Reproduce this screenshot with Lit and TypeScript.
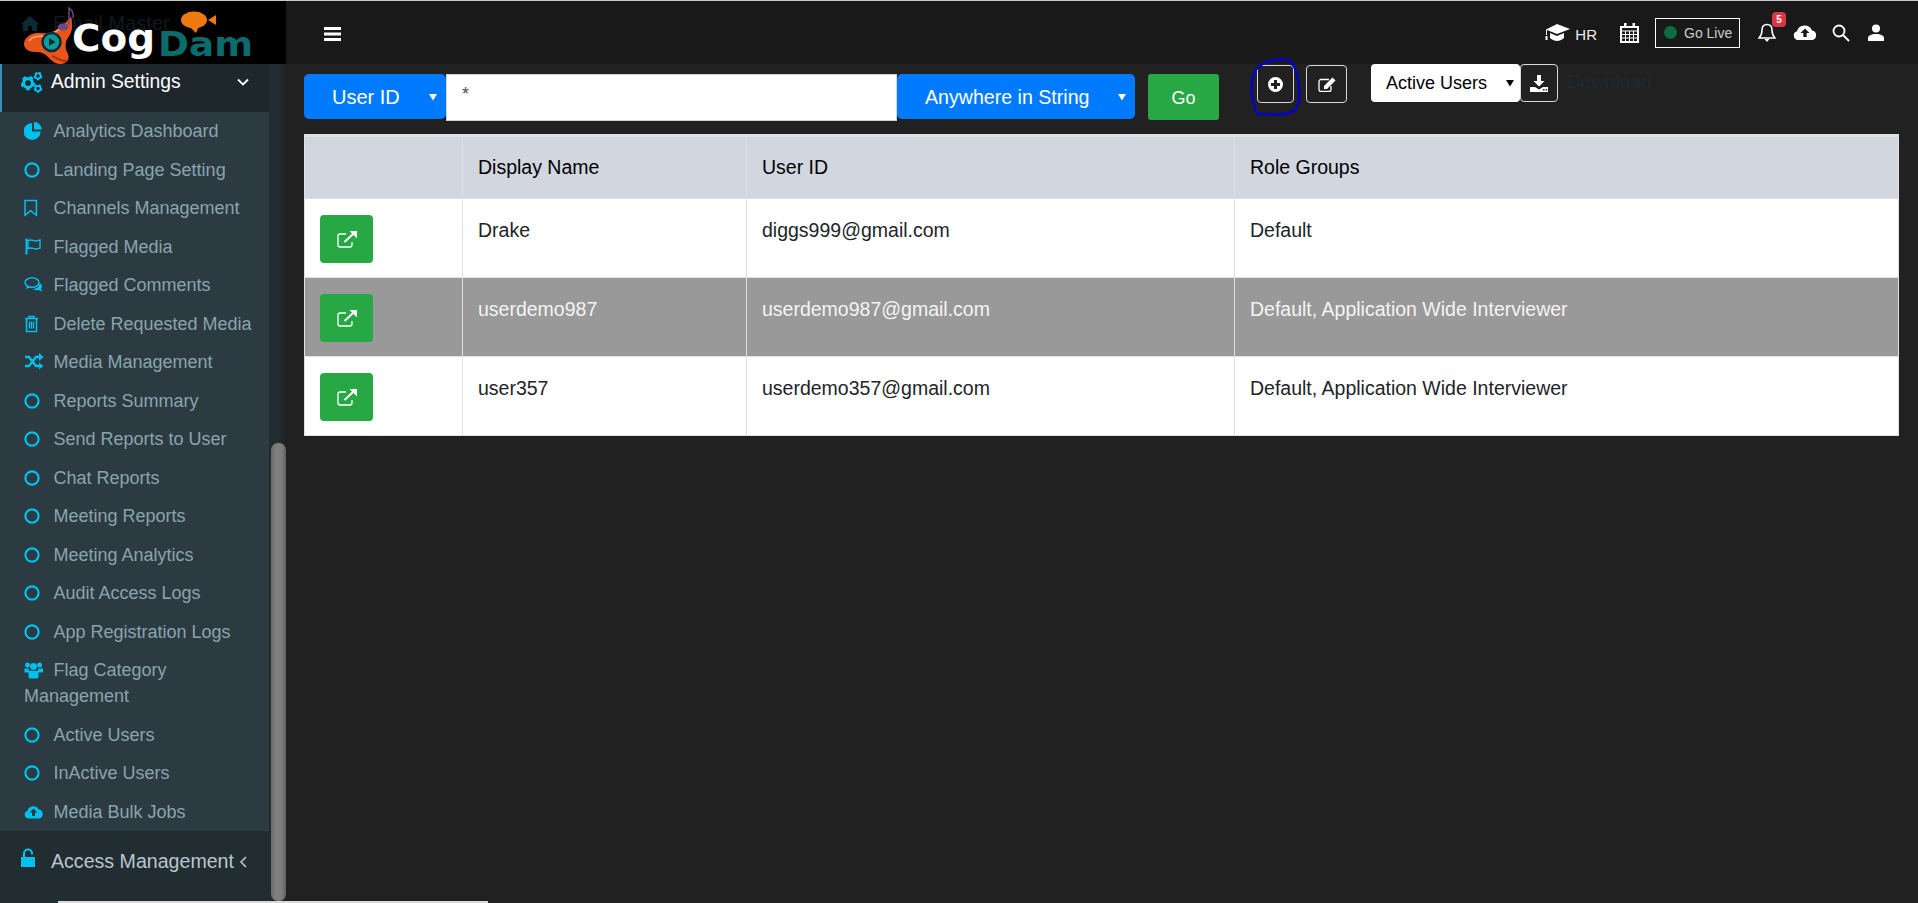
import { LitElement, html, css, svg } from "lit";
import { customElement } from "lit/decorators.js";

const ring = html`<svg class="ico" viewBox="0 0 20 20"><circle cx="8" cy="10" r="6.6" fill="none" stroke="currentColor" stroke-width="2.2" /></svg>`;
const pie = html`<svg class="ico" viewBox="0 0 20 20"><path d="M8 2v8.5h8.6A8.5 8.5 0 1 1 8 2z" fill="currentColor" /><path d="M10 1a8 8 0 0 1 7.8 7.6H10z" fill="currentColor" /></svg>`;
const bookmark = html`<svg class="ico" viewBox="0 0 20 20"><path d="M1 2.5h11.4v14.6L6.7 12.6 1 17.1z" fill="none" stroke="currentColor" stroke-width="1.5" /></svg>`;
const flag = html`<svg class="ico" viewBox="0 0 20 20"><path d="M1.5 1.5h2v16h-2z" fill="currentColor" /><path d="M4 3.5c3-1.5 4 0 7 .4 2 .2 3.5-.4 5-.9v8.2c-2 .8-3.5 1-5.5.5-2.5-.6-4-1.3-6.5-.2z" fill="none" stroke="currentColor" stroke-width="1.4" /></svg>`;
const comments = html`<svg class="ico" viewBox="0 0 20 20"><ellipse cx="8" cy="7.5" rx="7" ry="4.8" fill="none" stroke="currentColor" stroke-width="1.4" /><path d="M3 11l-1 3 4-1.6zM15.5 8c2.5 1 3.5 3.5 1.5 5.5l1.5 3-4.5-1.5c-2 .4-4 0-5.5-1 3 0 7-1.5 7-6z" fill="currentColor" /></svg>`;
const trash = html`<svg class="ico" viewBox="0 0 20 20"><path d="M1 4.5h13M5 4.5V2.5h5v2M2.5 4.5v13h10v-13" fill="none" stroke="currentColor" stroke-width="1.6" /><path d="M5.5 7.5v7M7.5 7.5v7M9.5 7.5v7" stroke="currentColor" stroke-width="1.3" /></svg>`;
const shuffle = html`<svg class="ico" viewBox="0 0 20 20"><path d="M1 5h4l7 9h4M1 14h4l7-9h4" fill="none" stroke="currentColor" stroke-width="2.4" /><path d="M15 1l4.5 4L15 9zM15 10.5l4.5 3.5L15 17.5z" fill="currentColor" /></svg>`;
const users = html`<svg class="ico" viewBox="0 0 20 20"><circle cx="3.5" cy="5" r="2.5" fill="currentColor" /><circle cx="15.5" cy="5" r="2.5" fill="currentColor" /><circle cx="9.5" cy="6.5" r="3.4" fill="currentColor" /><path d="M0.5 8.5h4l1 4H0.5zM14.5 8.5h4.5v4h-5.5z" fill="currentColor" /><path d="M4.5 11.5c1 -1 2-1 3-.8h4c1-.2 2 0 3 .8v5.5c0 1-1 1.5-2 1.5h-6c-1 0-2-.5-2-1.5z" fill="currentColor" /></svg>`;
const cloudUp = html`<svg class="ico" viewBox="0 0 20 20"><path d="M4.5 16.5a4 4 0 0 1-1-7.8 6 6 0 0 1 11-1.5 4.8 4.8 0 0 1 1 9.3z" fill="currentColor" /><path d="M9.5 6.5l3.8 4h-2.3v3.5H8v-3.5H5.7z" fill="#2c3b41" /></svg>`;

const navItems = [
  { label: "Analytics Dashboard", icon: pie },
  { label: "Landing Page Setting", icon: ring },
  { label: "Channels Management", icon: bookmark },
  { label: "Flagged Media", icon: flag },
  { label: "Flagged Comments", icon: comments },
  { label: "Delete Requested Media", icon: trash },
  { label: "Media Management", icon: shuffle },
  { label: "Reports Summary", icon: ring },
  { label: "Send Reports to User", icon: ring },
  { label: "Chat Reports", icon: ring },
  { label: "Meeting Reports", icon: ring },
  { label: "Meeting Analytics", icon: ring },
  { label: "Audit Access Logs", icon: ring },
  { label: "App Registration Logs", icon: ring },
  { label: "Flag Category Management", icon: users },
  { label: "Active Users", icon: ring },
  { label: "InActive Users", icon: ring },
  { label: "Media Bulk Jobs", icon: cloudUp },
];

const rows = [
  { name: "Drake", id: "diggs999@gmail.com", roles: "Default" },
  { name: "userdemo987", id: "userdemo987@gmail.com", roles: "Default, Application Wide Interviewer", hot: true },
  { name: "user357", id: "userdemo357@gmail.com", roles: "Default, Application Wide Interviewer" },
];

const caret = html`<svg class="caret" viewBox="0 0 8 8"><path d="M0 1h8L4 7.5z" fill="currentColor" /></svg>`;

const cog = (x: number, y: number, r: number) => svg`
  <circle cx=${x} cy=${y} r=${r} fill="none" stroke="currentColor" stroke-width=${r * 0.7} />
  <circle cx=${x} cy=${y} r=${r * 1.4} fill="none" stroke="currentColor" stroke-width=${r * 0.55} stroke-dasharray=${r * 0.85} />`;

@customElement("app-root")
export class AppRoot extends LitElement {
  static styles = css`
    :host {
      display: block;
      position: relative;
      width: 1918px;
      height: 903px;
      overflow: hidden;
      background: #212121;
      font-family: "Liberation Sans", Arial, sans-serif;
      color: #212529;
    }
    .topline {
      height: 1px;
      background: #c9c9c9;
    }
    .shell {
      display: flex;
      height: 902px;
    }
    aside {
      width: 286px;
      flex: none;
      display: flex;
      flex-direction: column;
    }
    .brand {
      height: 63px;
      background: #000;
      flex: none;
    }
    .brand svg {
      display: block;
    }
    .side-body {
      flex: 1;
      display: flex;
      min-height: 0;
    }
    .menu {
      width: 269px;
      flex: none;
      display: flex;
      flex-direction: column;
      background: #222d32;
    }
    .track {
      flex: 1;
      background: linear-gradient(to right, #222d32, #222d32 60%, #212121);
    }
    .thumb {
      width: 15px;
      height: 458px;
      margin: 379px 0 0 2px;
      border-radius: 7px;
      background: linear-gradient(to right, #6b6b6b, #7e7e7e 30%, #7e7e7e 70%, #5f5f5f);
    }
    .section {
      display: flex;
      align-items: center;
      height: 48px;
      padding: 0 0 12px 19px;
      box-sizing: border-box;
      color: #fff;
      font-size: 19.3px;
      background: #1e282c;
      border-left: 2px solid #3c8dbc;
    }
    .section .head-ico {
      width: 22px;
      height: 22px;
      color: #00c0ef;
      margin-right: 8px;
      flex: none;
    }
    .section .chev {
      width: 12px;
      height: 8px;
      margin-left: 56px;
    }
    .section.closed {
      height: 72px;
      flex: 1;
      padding: 19px 0 0 21px;
      border-left: none;
      background: #222d32;
      color: #b8c7ce;
      font-size: 19.6px;
      align-items: flex-start;
    }
    .section.closed .head-ico {
      width: 14px;
      height: 20px;
      margin: -2px 16px 0 0;
    }
    .section.closed .chev {
      width: 8px;
      height: 12px;
      margin: 6px 0 0 5px;
    }
    .sub {
      background: #2c3b41;
      flex: none;
    }
    .sub div {
      padding: 6.25px 10px 6.25px 24px;
      font-size: 18px;
      line-height: 26px;
      color: #8aa4af;
    }
    .ico {
      display: inline-block;
      width: 20px;
      height: 20px;
      margin-right: 9.5px;
      color: #00c0ef;
      vertical-align: -4px;
    }

    main {
      flex: 1;
      min-width: 0;
      display: flex;
      flex-direction: column;
    }
    header {
      height: 63px;
      flex: none;
      display: flex;
      align-items: center;
      background: #191919;
      color: #fff;
    }
    .burger {
      width: 17px;
      height: 14px;
      margin: 3px 0 0 38px;
    }
    .spacer {
      flex: 1;
    }
    .hr {
      font-size: 15px;
      margin: 4px 23px 0 5px;
      color: #eee;
    }
    .golive {
      display: flex;
      align-items: center;
      width: 85px;
      height: 30px;
      box-sizing: border-box;
      margin: 0 18px 0 16px;
      padding-left: 8px;
      border: 1px solid #fff;
      font-size: 14px;
      color: #ccc;
    }
    .golive i {
      width: 13px;
      height: 13px;
      margin-right: 7px;
      border-radius: 50%;
      background: #0d6e3d;
    }
    .bell {
      position: relative;
      display: flex;
      margin-right: 17px;
    }
    .badge {
      position: absolute;
      left: 14px;
      top: -11px;
      width: 14px;
      height: 15px;
      border-radius: 4px;
      background: #dc3545;
      color: #fff;
      font-size: 10px;
      font-weight: bold;
      line-height: 15px;
      text-align: center;
    }
    .top-ico {
      flex: none;
    }
    .cap {
      margin-top: 1px;
    }
    .lens {
      margin-left: 15px;
    }
    .person {
      margin: 0 34px 0 18px;
    }

    .toolbar {
      display: flex;
      align-items: flex-start;
      height: 70px;
      padding-left: 18px;
      box-sizing: border-box;
    }
    .pick {
      display: flex;
      align-items: center;
      justify-content: space-between;
      box-sizing: border-box;
      height: 45px;
      margin-top: 10px;
      padding: 1px 9px 0 28px;
      background: #007bff;
      color: #fff;
      font-size: 20px;
      border-radius: 5px;
    }
    .caret {
      width: 8px;
      height: 8px;
    }
    .pick.field {
      width: 142px;
    }
    .pick.where {
      width: 238px;
      font-size: 19.6px;
    }
    .search {
      box-sizing: border-box;
      width: 451px;
      height: 47px;
      margin-top: 10px;
      padding: 9px 0 0 15px;
      background: #fff;
      border: 1px solid #ced4da;
      color: #495057;
      font-size: 18px;
    }
    .go {
      box-sizing: border-box;
      width: 71px;
      height: 46px;
      margin: 10px 0 0 13px;
      background: #28a745;
      border-radius: 3px;
      color: #fff;
      font-size: 18px;
      line-height: 48px;
      text-align: center;
    }
    .plus-wrap {
      position: relative;
      margin: 1px 0 0 38px;
    }
    .scribble {
      position: absolute;
      left: -9px;
      top: -8px;
      width: 53px;
      height: 60px;
    }
    .ghost {
      display: flex;
      align-items: center;
      justify-content: center;
      box-sizing: border-box;
      height: 38px;
      border: 1px solid #d8d8d8;
      border-radius: 4px;
      color: #fff;
    }
    .ghost.plus {
      width: 37px;
    }
    .ghost.edit {
      width: 41px;
      margin: 1px 0 0 12px;
    }
    .ghost.dl {
      width: 38px;
    }
    .status {
      display: flex;
      align-items: center;
      justify-content: space-between;
      box-sizing: border-box;
      width: 149px;
      height: 38px;
      margin-left: 24px;
      padding: 0 6px 0 15px;
      background: #fff;
      border-radius: 4px;
      color: #000;
      font-size: 18px;
    }
    .ghost-text {
      margin: 7px 0 0 9px;
      font-size: 19px;
      color: #1e2a31;
    }

    .grid {
      width: 1595px;
      margin-left: 18px;
      border-collapse: collapse;
      table-layout: fixed;
      background: #fff;
      border-top: 3px solid #dee2e6;
      font-size: 19.5px;
    }
    .grid th {
      box-sizing: border-box;
      height: 63px;
      padding: 0 0 0 15px;
      background: #d2d6df;
      color: #000;
      font-weight: normal;
      text-align: left;
      border: 1px solid #dee2e6;
    }
    .grid td {
      height: 79px;
      padding: 20px 0 0 15px;
      vertical-align: top;
      border: 1px solid #dee2e6;
      box-sizing: border-box;
    }
    .grid td.act {
      padding: 16px 0 0 15px;
    }
    .grid tr.hot td {
      background: #999;
      color: #f4f4f4;
    }
    .open {
      display: flex;
      align-items: center;
      justify-content: center;
      width: 53px;
      height: 48px;
      border-radius: 4px;
      background: #28a745;
      color: #fff;
    }
    .bottomline {
      position: absolute;
      left: 58px;
      bottom: 0;
      width: 430px;
      height: 2px;
      background: #d8d8d8;
    }
  `;

  private logo() {
    return html`<svg width="286" height="63" viewBox="0 0 286 63">
      <path d="M21 23l9-8 9 8h-2v7h-5v-5h-4v5h-5v-7z" fill="#0a2b35" />
      <text x="53" y="29" font-family="Liberation Sans" font-size="20" fill="#0e1a1f">Email Master</text>
      <path d="M71 16c-3 2-7 10-16 14-7 3-12 2-19 2-7 1-12 6-12 11 0 5 5 8 11 8 6 0 9 1 13 5 4 4 8 8 14 7 5-1 8-5 6-10-2-4-3-7-2-12 1-4 6-8 6-15 0-4 0-9-1-10z" fill="#e9541a" />
      <path d="M29 40c3-5 10-5 16-5 7-1 14-6 20-12" fill="none" stroke="#ff9a5c" stroke-width="2" />
      <path d="M52 55c4 2 9 5 14 5" fill="none" stroke="#a8300c" stroke-width="2" />
      <circle cx="51.5" cy="41" r="9" fill="#0d9a9a" stroke="#0a2b35" stroke-width="2.5" />
      <path d="M49 37l6.5 4-6.5 4z" fill="#06292c" />
      <path d="M69 24V7c3 2 5 5 4 10" fill="none" stroke="#6b4a86" stroke-width="1.5" />
      <ellipse cx="63" cy="26" rx="5.5" ry="3.5" fill="#6b4a86" />
      <text x="72" y="50" font-family="DejaVu Sans" font-weight="bold" font-size="37" fill="#fff" textLength="83" lengthAdjust="spacingAndGlyphs">Cog</text>
      <text x="158" y="55" font-family="DejaVu Sans" font-weight="bold" font-size="34" fill="#0c6b6b" textLength="95" lengthAdjust="spacingAndGlyphs">Dam</text>
      <ellipse cx="194" cy="19" rx="13" ry="8.5" fill="#f07a10" />
      <path d="M189 25l7 7 3-7z" fill="#f07a10" />
      <path d="M208 19l8-5v10z" fill="#f07a10" />
    </svg>`;
  }

  private topIcons() {
    return html`
      <svg class="top-ico cap" width="26" height="18" viewBox="0 0 26 18">
        <path d="M13 0L26 5l-13 5L3 6v5H2V5.5z" fill="#fff" />
        <path d="M6 9l7 3 7-3v5c-2 2-5 3-7 3s-5-1-7-3zM1.5 12h2v4h-2z" fill="#fff" />
      </svg>
      <span class="hr">HR</span>
      <svg class="top-ico" width="19" height="20" viewBox="0 0 19 20">
        <path d="M1 4h17v15H1z" fill="none" stroke="#fff" stroke-width="2" />
        <path d="M1 8h17M1 11.5h17M1 15h17M5.5 8v11M9.5 8v11M13.5 8v11" stroke="#fff" stroke-width="1" />
        <path d="M4 0h2.5v5H4zM12.5 0H15v5h-2.5z" fill="#fff" />
      </svg>
      <div class="golive"><i></i>Go Live</div>
      <div class="bell">
        <svg width="18" height="19" viewBox="0 0 18 19">
          <path d="M9 1.5c3.5 0 5 2.5 5 5.5 0 4 1 6 3 8H1c2-2 3-4 3-8 0-3 1.5-5.5 5-5.5z" fill="none" stroke="#fff" stroke-width="1.5" />
          <path d="M6.5 16h5L9 19z" fill="#fff" />
        </svg>
        <span class="badge">5</span>
      </div>
      <svg class="top-ico" width="24" height="15" viewBox="0 0 24 15">
        <path d="M5 15a4.5 4.5 0 0 1-1-8.8A8 8 0 0 1 19 5.5a4.8 4.8 0 0 1 0 9.5z" fill="#fff" />
        <path d="M12 3.5l4.5 4.5h-2.8v4h-3.4V8H7.5z" fill="#191919" />
      </svg>
      <svg class="top-ico lens" width="18" height="18" viewBox="0 0 18 18">
        <circle cx="7" cy="7" r="5.5" fill="none" stroke="#fff" stroke-width="1.8" />
        <path d="M11 11l6 6" stroke="#fff" stroke-width="2" />
      </svg>
      <svg class="top-ico person" width="16" height="17" viewBox="0 0 16 17">
        <circle cx="8" cy="4.5" r="4" fill="#fff" />
        <path d="M0 17v-3c0-2 3-4 8-4s8 2 8 4v3z" fill="#fff" />
      </svg>
    `;
  }

  render() {
    return html`
      <div class="topline"></div>
      <div class="shell">
        <aside>
          <div class="brand">${this.logo()}</div>
          <div class="side-body">
            <div class="menu">
              <div class="section">
                <svg class="head-ico" viewBox="0 0 22 22">
                  ${cog(7, 12, 4.4)} ${cog(17, 5, 2.6)} ${cog(17, 17.5, 2.6)}
                </svg>
                Admin Settings
                <svg class="chev" viewBox="0 0 12 8"><path d="M1 1.5l5 5 5-5" fill="none" stroke="#fff" stroke-width="1.8" /></svg>
              </div>
              <div class="sub">
                ${navItems.map((n) => html`<div>${n.icon}${n.label}</div>`)}
              </div>
              <div class="section closed">
                <svg class="head-ico" viewBox="0 0 14 20">
                  <path d="M3 9V5.5a4 4 0 0 1 8 0v1" fill="none" stroke="currentColor" stroke-width="2.2" />
                  <path d="M0 9h14v10H0z" fill="currentColor" />
                </svg>
                Access Management
                <svg class="chev" viewBox="0 0 8 12"><path d="M7 1L2 6l5 5" fill="none" stroke="#b8c7ce" stroke-width="1.6" /></svg>
              </div>
            </div>
            <div class="track"><div class="thumb"></div></div>
          </div>
        </aside>
        <main>
          <header>
            <svg class="burger" viewBox="0 0 17 14"><path d="M0 0h17v3H0zM0 5.5h17v3H0zM0 11h17v3H0z" fill="#fff" /></svg>
            <div class="spacer"></div>
            ${this.topIcons()}
          </header>
          <div class="toolbar">
            <div class="pick field">User ID${caret}</div>
            <div class="search">*</div>
            <div class="pick where">Anywhere in String${caret}</div>
            <div class="go">Go</div>
            <div class="plus-wrap">
              <div class="ghost plus">
                <svg width="15" height="15" viewBox="0 0 15 15">
                  <circle cx="7.5" cy="7.5" r="7.5" fill="#fff" />
                  <path d="M6 3h3v3h3v3H9v3H6V9H3V6h3z" fill="#212121" />
                </svg>
              </div>
              <svg class="scribble" viewBox="20 15 160 180">
                <path d="M50 190C30 150 22 110 40 60C55 30 100 18 140 22C165 35 175 90 175 120C175 150 168 172 155 180C125 190 85 190 50 185" fill="none" stroke="#0000d4" stroke-width="7" />
              </svg>
            </div>
            <div class="ghost edit">
              <svg width="18" height="15" viewBox="0 0 18 15">
                <path d="M11 2.5H3a2 2 0 0 0-2 2v8a2 2 0 0 0 2 2h8a2 2 0 0 0 2-2V9" fill="none" stroke="#fff" stroke-width="1.3" />
                <path d="M14.5 0.5l3 3L9 12H6V9z" fill="#fff" />
              </svg>
            </div>
            <div class="status">Active Users${caret}</div>
            <div class="ghost dl">
              <svg width="18" height="17" viewBox="0 0 18 17">
                <path d="M7 0h4v6h3.5L9 11.5 3.5 6H7zM0 12h5l4 2.5 4-2.5h5v5H0z" fill="#fff" />
                <path d="M13 14h1.5v1.5H13zM15.5 14H17v1.5h-1.5z" fill="#212121" />
              </svg>
            </div>
            <span class="ghost-text">Download</span>
          </div>
          <table class="grid">
            <colgroup>
              <col style="width:158px" /><col style="width:284px" /><col style="width:488px" /><col />
            </colgroup>
            <thead>
              <tr><th></th><th>Display Name</th><th>User ID</th><th>Role Groups</th></tr>
            </thead>
            <tbody>
              ${rows.map(
                (r) => html`<tr class=${r.hot ? "hot" : ""}>
                  <td class="act">
                    <div class="open">
                      <svg width="20" height="17" viewBox="0 0 20 17">
                        <path d="M9 3H3a2 2 0 0 0-2 2v9a2 2 0 0 0 2 2h10a2 2 0 0 0 2-2v-3" fill="none" stroke="#fff" stroke-width="1.3" />
                        <path d="M7.5 11L16 3" stroke="#fff" stroke-width="2" />
                        <path d="M12.5 0H20v7.5z" fill="#fff" />
                      </svg>
                    </div>
                  </td>
                  <td>${r.name}</td>
                  <td>${r.id}</td>
                  <td>${r.roles}</td>
                </tr>`
              )}
            </tbody>
          </table>
        </main>
      </div>
      <div class="bottomline"></div>
    `;
  }
}
